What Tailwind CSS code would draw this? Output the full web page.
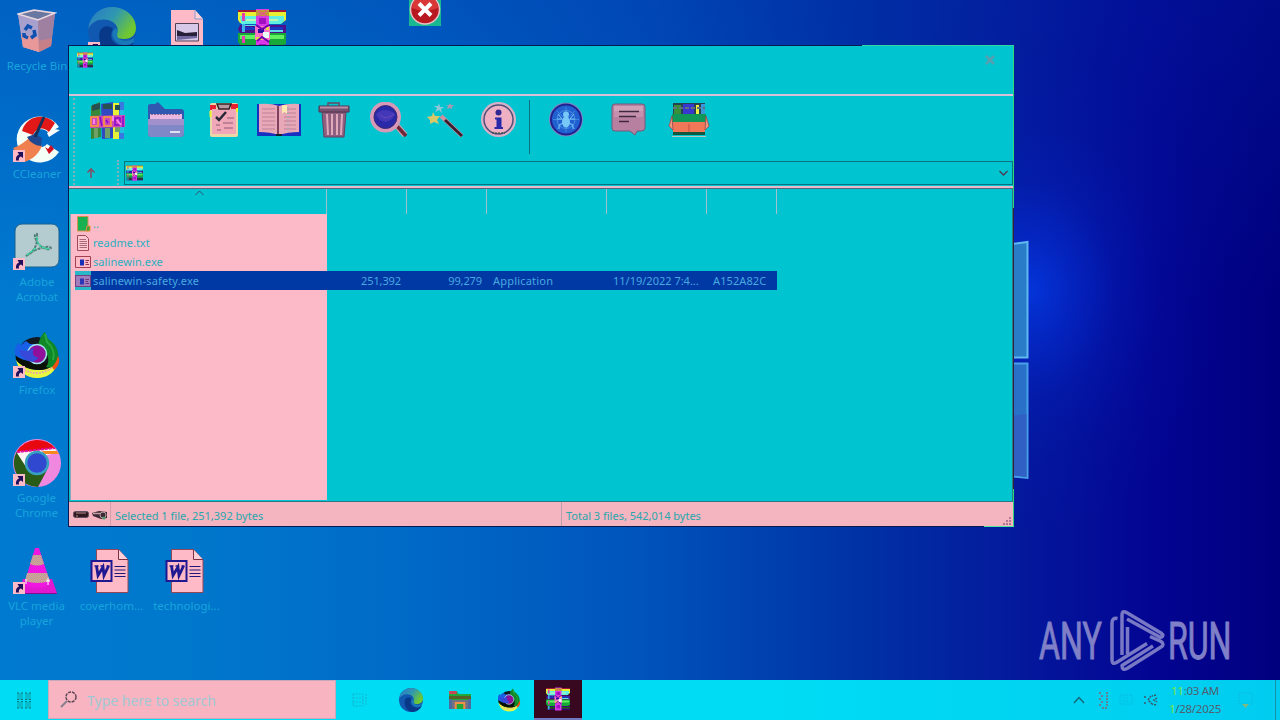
<!DOCTYPE html>
<html lang="en">
<head>
    <meta charset="UTF-8">
    <meta name="viewport" content="width=device-width, initial-scale=1.0">
    <title>Desktop</title>
    <script src="https://cdn.jsdelivr.net/npm/@tailwindcss/browser@4"></script>
</head>
<body class="font-['Noto_Sans','Open_Sans',sans-serif] overflow-hidden">
    <!-- Shared icons -->
    <svg class="absolute h-0 w-0">
        <defs>
            <linearGradient id="eg" x1="0" x2="1" y1="0" y2=".5"><stop offset="0" stop-color="#2878c8"/><stop offset=".55" stop-color="#3098b0"/><stop offset="1" stop-color="#70c830"/></linearGradient>
            <pattern id="dither" width="2" height="2" patternUnits="userSpaceOnUse"><rect width="2" height="2" fill="#d8b080"/><path d="M0 0H1V1H0ZM1 1H2V2H1Z" fill="#b890b0"/></pattern>
        </defs>
        <symbol id="shortcut" viewBox="0 0 12 12">
            <rect width="12" height="12" fill="#ffbac8"/>
            <path d="M3 10.500C2.500 7 4 5 6 4.500L4.500 2H10V8L8 6.500C6 7 5.500 8.500 6 10.500Z" fill="#20105c"/>
        </symbol>
        <symbol id="rar" viewBox="0 0 48 48" preserveAspectRatio="none">
            <path d="M0 2H48V12L44 15H2L0 12Z" fill="#e8f030"/>
            <path d="M0 2H18V4H0ZM31 2H48V4H31Z" fill="#a01838"/>
            <path d="M2 8H46V13L43 16H3Z" fill="#60f0e0"/>
            <path d="M8 11H40V13H8Z" fill="#b8f8b0"/>
            <path d="M2 17H48V25H2L0 21Z" fill="#50108c"/>
            <path d="M3 19H45V22H3Z" fill="#1838c0"/>
            <path d="M7 17H18V18H7ZM32 22H45V24H32Z" fill="#60d8e8"/>
            <path d="M0 25H48V36L44 38H3L0 34Z" fill="#18a838"/>
            <path d="M2 27H46V31H2Z" fill="#60f060"/>
            <path d="M2 38H48V46H2Z" fill="#380878"/>
            <path d="M2 40H48V43H2Z" fill="#206010"/>
            <path d="M4 5H7V13H4ZM4 28H7V35H4Z" fill="#e040b0"/>
            <path d="M4 16H7V24H4ZM4 38H7V45H4Z" fill="#40b0e8"/>
            <path d="M18 1H31V47H18Z" fill="#d838e8"/>
            <path d="M18 2H31V8H18Z" fill="#c0a030"/>
            <path d="M20 3L29 8M29 3L20 8" stroke="#e06080" stroke-width="1.500"/>
            <path d="M21 10H28V16H21ZM21 36H28V43H21Z" fill="#a010c0"/>
            <path d="M17 18H32V32H17Z" fill="#ff70c8"/>
            <path d="M20 21H26V25H20Z" fill="#3010a0"/>
            <path d="M25 24H31V30H25Z" fill="#e8fff8"/>
            <path d="M18 29H24V32H18ZM28 19H31V22H28Z" fill="#e8e040"/>
            <path d="M18 17L24 21L31 17M19 33L24 29L31 34" stroke="#7000b0" stroke-width="2" fill="none"/>
        </symbol>
        <symbol id="edge" viewBox="0 0 48 48">
            <circle cx="24" cy="24" r="24" fill="#1058b0"/>
            <path d="M0 22C2 8 12 0 24 0C38 0 48 10 48 21C48 29 42 32 36 32C29 32 27 29 29 26C31 21 28 15 20 13C12 11 4 14 0 22Z" fill="url(#eg)"/>
            <path d="M12 24C15 18 21 18 25 22C22 27 22 34 30 38C37 41 42 39 46 35C42 44 34 48 26 48C15 46 9 34 12 24Z" fill="#083888"/>
            <path d="M28 21C31 24 28 27 30 31C34 35 42 34 46 31V35C39 40 30 39 26 32C23 28 24 23 28 21Z" fill="#1878b8"/>
        </symbol>
        <symbol id="firefox" viewBox="0 0 48 48">
            <circle cx="24" cy="26" r="20" fill="#101820"/>
            <path d="M3 28C10 38 19 39 28 39C36 39 42 34 46 26C44 41 35 47 24 47C13 47 5 40 3 28Z" fill="#e8f840"/>
            <path d="M9 37C18 44 31 44 41 35" stroke="#e8b0a0" stroke-width="2" fill="none" stroke-dasharray="2 1"/>
            <path d="M2 20C10 32 28 38 44 27L41 34C26 44 8 36 3 29Z" fill="#081008"/>
            <path d="M2 24V17L5 12L8 14L13 10L17 13H28L26 30C15 31 8 29 2 24Z" fill="#1860e8"/>
            <path d="M25 14C27 7 29 3 32 1L35 8C42 12 47 20 45 29C43 35 38 38 33 36C38 30 35 20 25 14Z" fill="#108828"/>
            <path d="M32 3L34 11C40 16 42 23 40 29" stroke="#28a840" stroke-width="2" fill="none"/>
            <path d="M45 25C48 30 45 36 41 39L39 36C42 33 44 29 45 25Z" fill="#f05010"/>
            <circle cx="24" cy="23" r="9.500" fill="#90109c" stroke="#a0e8e8" stroke-width="1.500"/>
            <path d="M6 19L14 20L21 17C18 23 21 26 26 27L20 31C12 30 8 26 6 19Z" fill="#3848d8"/>
        </symbol>
        <symbol id="word" viewBox="0 0 38 44">
            <path d="M6 .500H28L37.500 11V43.500H6Z" fill="#ffbac8" stroke="#904858"/>
            <path d="M28 .500V10.500H37.500" fill="#ffd0d8" stroke="#803040"/>
            <path d="M24 17.500H35M24 21H35M24 24.500H35M24 27.500H35" stroke="#201878" stroke-width="1.200"/>
            <path d="M1 12H21V32H1Z" fill="#ffbac8" stroke="#201890" stroke-width="2"/>
            <path d="M4 17H8M10 17H13M16 17H19" stroke="#201890" stroke-width="1.500"/>
            <path d="M6 17L7.500 26.500L12.500 18L13.500 26.500L18 17" stroke="#201890" stroke-width="2.800" fill="none"/>
        </symbol>
        <symbol id="exe" viewBox="0 0 16 12">
            <path d="M.500 .500H15.500V11.500H.500Z" fill="#ffbac8" stroke="#a04050"/>
            <path d="M5 3.500H9V9.500H5Z" fill="#1830b8"/>
            <path d="M10.500 4.500H14M10.500 6.500H13M10.500 8.500H14" stroke="#903050"/>
        </symbol>
    </svg>

    <div class="relative flex h-[720px] w-[1280px] flex-col overflow-hidden bg-[#004ebc]">
        <!-- Wallpaper -->
        <div class="absolute inset-0 bg-[linear-gradient(90deg,#007ad0_0%,#0078cc_14%,#006cc8_30%,#0054bc_50%,#0030a4_68%,#04189c_80%,#030592_90%,#00007e_100%)]"></div>
        <div class="absolute inset-x-0 top-0 h-[300px] bg-[linear-gradient(180deg,#0028a44c,#0028a400)]"></div>
        <div class="absolute left-[840px] top-[50px] h-[480px] w-[380px] bg-[radial-gradient(closest-side,#0434d8_0%,#0430d8a0_20%,#0424c450_45%,#041cb020_70%,#04109c00_100%)]"></div>
        <svg class="absolute left-[1008px] top-[240px]" width="24" height="242" viewBox="0 0 24 242">
            <path d="M0 4.500L19.500 2V117.500H0Z" fill="#287cc8" stroke="#60b8f0" stroke-width="2"/>
            <path d="M0 123.500H19.500V238L0 236Z" fill="#2870c8" stroke="#48a0e8" stroke-width="2"/>
            <path d="M0 176L18.500 174V237L0 235Z" fill="#3060c4"/>
        </svg>

        <!-- Desktop icons -->
        <div class="absolute left-0 top-[8px] flex w-[74px] flex-col items-center text-[11.5px] leading-[15px] text-[#18a4dc]">
            <svg width="40" height="46" viewBox="0 0 40 46">
                <path d="M1 6L17 2L38 5L34 38L22 44L6 39Z" fill="#b890b0"/>
                <path d="M1 6L21 12L22 44L6 39Z" fill="#a8a0cc"/><path d="M4 26L22 30V44L6 39Z" fill="#e89898"/>
                <path d="M21 12L38 5L34 38L22 44Z" fill="#a080a0"/><path d="M22 33L35 30L34 38L22 44Z" fill="#c88088"/>
                <path d="M3 6.500L18 3L36 6L21 11Z" fill="#6878a0"/>
                <path d="M1 6L17 2L38 5L21 12Z" fill="none" stroke="#e8d8e0" stroke-width="1.500"/>
                <path d="M8 22L11 18L15 20M17 22L18 27L14 30M11 30L7 28L7 25" stroke="#1050b0" stroke-width="3.500" fill="none"/>
            </svg>
            <span class="mt-1">Recycle Bin</span>
        </div>
        <svg class="absolute left-[88px] top-[7px]" width="48" height="48"><use href="#edge"/></svg>
        <svg class="absolute left-[88px] top-[42px]" width="12" height="12"><use href="#shortcut"/></svg>
        <svg class="absolute left-[171px] top-[10px]" width="32" height="40" viewBox="0 0 32 40">
            <path d="M0 0H24L32 9V40H0Z" fill="#ffbac8"/>
            <path d="M24 0V9H32" fill="#ffd0d8" stroke="#8898d0"/>
            <path d="M4.500 13.500H27.500V31H4.500Z" fill="#d8c8e8" stroke="#504058"/>
            <path d="M6 20L14 23L26 22V26H6Z" fill="#282038"/><path d="M6 26H26V28L6 30Z" fill="#7068a0"/>
        </svg>
        <svg class="absolute left-[238px] top-[8px]" width="48" height="48"><use href="#rar"/></svg>
        <div class="absolute left-[409px] top-0 h-[26px] w-[32px] bg-[#18b890]">
            <svg width="32" height="26" viewBox="0 0 32 26">
                <circle cx="16" cy="9.500" r="14.500" fill="#b81820" stroke="#e8c0c8" stroke-width="1.500"/>
                <path d="M3 8A13 13 0 0 1 29 8Q16 13 3 8Z" fill="#d83838"/>
                <path d="M10 3.500L22 15.500M22 3.500L10 15.500" stroke="#fff" stroke-width="4"/>
            </svg>
        </div>

        <div class="absolute left-0 top-[115px] flex w-[74px] flex-col items-center text-[11.5px] leading-[15px] text-[#18a4dc]">
            <svg width="48" height="48" viewBox="0 0 48 48">
                <path d="M46 12A23 23 0 1 0 46 37L34 29C28 36 19 30 20 21C22 13 31 12 36 18Z" fill="#f4fff8"/>
                <path d="M42 8C31-3 13 1 9 16L20 20C24 12 31 12 36 17Z" fill="#e01818"/>
                <path d="M32 32L35 34L38 30L41 34L36 39Z" fill="#d01020"/><path d="M47 15L36 22L34 18L41 14Z" fill="#f8ffff"/>
                <path d="M0 33C10 30 13 24 18 23L29 31C25 40 18 46 10 47Z" fill="#f08050"/>
                <path d="M14 22L22 19L29 23L28 31C24 31 17 28 14 22Z" fill="#204890"/>
                <path d="M31 2L22 22" stroke="#183058" stroke-width="3"/>
                <use href="#shortcut" x="0" y="35" width="12" height="12"/>
            </svg>
            <span class="mt-[3px]">CCleaner</span>
        </div>
        <div class="absolute left-0 top-[223px] flex w-[74px] flex-col items-center text-center text-[11.5px] leading-[15px] text-[#18a4dc]">
            <svg width="48" height="48" viewBox="0 0 48 48">
                <rect x="2" y="1" width="44" height="43" rx="7" fill="#b4ccd0" stroke="#186090"/>
                <path d="M13 33C21 29 25 22 24 11C21 10 21 15 25 20C28 25 36 28 38 25C37 22 22 25 13 33Z" fill="none" stroke="#508078" stroke-width="2" stroke-dasharray="3 1"/>
                <path d="M24 14C24 22 28 25 36 26M14 32L23 25" fill="none" stroke="#30e8a8" stroke-width="1.200" stroke-dasharray="3 1"/>
                <use href="#shortcut" x="0" y="35" width="12" height="12"/>
            </svg>
            <span class="mt-[3px]">Adobe<br>Acrobat</span>
        </div>
        <div class="absolute left-0 top-[331px] flex w-[74px] flex-col items-center text-[11.5px] leading-[15px] text-[#18a4dc]">
            <svg width="48" height="48" viewBox="0 0 48 48">
                <use href="#firefox" width="48" height="48"/>
                <use href="#shortcut" x="0" y="35" width="12" height="12"/>
            </svg>
            <span class="mt-[3px]">Firefox</span>
        </div>
        <div class="absolute left-0 top-[439px] flex w-[74px] flex-col items-center text-center text-[11.5px] leading-[15px] text-[#18a4dc]">
            <svg width="48" height="48" viewBox="0 0 48 48">
                <circle cx="24" cy="24" r="24" fill="#f088e0"/>
                <path d="M4 12A24 24 0 0 1 43 10L24 13Z" fill="#e80810"/>
                <path d="M4 12A24 24 0 0 0 25 48L34 31L14 29Z" fill="#285c18"/>
                <path d="M4 14L42 9L44 14L24 18L15 31Z" fill="#fff4f4"/>
                <path d="M4 13L42 9" stroke="#e010a0" stroke-width="2" stroke-dasharray="3 1"/>
                <path d="M29 12H44L46 15H31Z" fill="#f88820"/>
                <circle cx="24" cy="24" r="11" fill="#3048d0" stroke="#38a0c0" stroke-width="2.500"/>
                <use href="#shortcut" x="0" y="35" width="12" height="12"/>
            </svg>
            <span class="mt-[3px] pr-px">Google<br>Chrome</span>
        </div>
        <div class="absolute left-0 top-[547px] flex w-[74px] flex-col items-center text-center text-[11.5px] leading-[15px] text-[#18a4dc]">
            <svg width="48" height="48" viewBox="0 0 48 48">
                <path d="M10 32H39L44 46H6Z" fill="#e018d0"/>
                <path d="M22 1H26L38 38Q24 44 11 38Z" fill="#f018e0"/>
                <path d="M20 8H28L31 17Q24 20 17 17ZM14 26H34L37 34Q24 38 12 34Z" fill="url(#dither)"/>
                <path d="M7 46.500H44" stroke="#801090"/><path d="M35 31V38M33 34H37M13 32V37" stroke="#fff" stroke-width="1"/>
                <use href="#shortcut" x="0" y="35" width="12" height="12"/>
            </svg>
            <span class="mt-[3px] whitespace-nowrap pr-px">VLC media<br>player</span>
        </div>
        <div class="absolute left-[74px] top-[549px] flex w-[74px] flex-col items-center text-[11.5px] leading-[15px] text-[#18a4dc]">
            <svg class="ml-[-3px]" width="39" height="44" preserveAspectRatio="none"><use href="#word"/></svg>
            <span class="mt-[5px] pl-px">coverhom...</span>
        </div>
        <div class="absolute left-[149px] top-[549px] flex w-[74px] flex-col items-center text-[11.5px] leading-[15px] text-[#18a4dc]">
            <svg class="ml-[-3px]" width="39" height="44"><use href="#word"/></svg>
            <span class="mt-[5px] pl-px">technologi...</span>
        </div>

        <!-- Watermark -->
        <div class="absolute left-[1038px] top-[608px]">
            <svg width="210" height="66" viewBox="0 0 210 66" fill="none" stroke="#7878c4">
                <text transform="translate(1 51) scale(.63 1)" font-family="Roboto, sans-serif" font-size="51" fill="#8080c8" stroke="#8080c8" stroke-width="1">ANY</text>
                <path d="M79.500 10.500Q74 9.500 74 15V52Q74 57 78.500 54.500L109 35.500M84 47V7Q84 2 88.500 4.500L123 25Q127 28 122.500 29.500L89 11M89.500 46V19M112 28.500L123 33.500Q127 36.500 123 39L89 60.500Q84 63 84 57.500L115 38" stroke-width="3.500" stroke-linejoin="round"/>
                <text transform="translate(130 51) scale(.63 1)" font-family="Roboto, sans-serif" font-size="51" fill="#8080c8" stroke="#8080c8" stroke-width="1">RUN</text>
            </svg>
        </div>

        <!-- Archive window -->
        <div class="absolute left-[68px] top-[45px] flex h-[482px] w-[946px] flex-col border border-[#081850] border-r-[#30d878] bg-[#00c4d0] text-[11px] text-[#28b0c0]">
            <div class="flex h-[48px] justify-between">
                <svg class="ml-2 mt-[6px]" width="16" height="16"><use href="#rar"/></svg>
                <svg class="mr-[18px] mt-[9px]" width="10" height="10" viewBox="0 0 10 10"><path d="M1 1L9 9M9 1L1 9" stroke="#58a0b0" stroke-width="2.500"/></svg>
            </div>
            <div class="h-[2px] bg-[#d8c0d8]"></div>
            <div class="flex h-[89px]">
                <div class="ml-[4px] mt-[2px] w-0 border-l-2 border-dotted border-[#88acc0]"></div>
                <div class="flex grow flex-col">
                    <!-- Toolbar -->
                    <div class="flex h-[64px] pl-[3px] pt-[6px]">
                        <div class="flex w-[59px] justify-center">
                            <svg width="36" height="37" viewBox="0 0 36 37">
                                <path d="M1 4L10 0L11 35L1 37Z" fill="#388838"/><path d="M11 2L23 0V36L12 37Z" fill="#3048c0"/>
                                <path d="M23 1H29V37H23Z" fill="#e8f038"/><path d="M29 0H34V37H29Z" fill="#3878e0"/>
                                <path d="M2 3L10 1V7L2 9ZM13 2H22V7H13ZM25 3H30V8H25Z" fill="#285050"/>
                                <path d="M4 26H8V36H4ZM15 26H20V36H15ZM25 25H31V30H25Z" fill="#70a068"/>
                                <path d="M30 8H34V31H30Z" fill="#20c0e0"/>
                                <path d="M0 14L35 13V25L0 26Z" fill="#d048b8"/>
                                <path d="M1 15H8V24H1ZM14 15H21V24H14Z" fill="none" stroke="#f8a030" stroke-width="1.500"/>
                                <path d="M10 15L12 24M16 18L18 21M25 16H30V23H25ZM33 14V25" stroke="#8008d0" stroke-width="1.500" fill="none"/>
                                <path d="M23 14V19M27 18L31 23M4 17V22" stroke="#ff80f0" stroke-width="2"/>
                            </svg>
                        </div>
                        <div class="flex w-[58px] justify-center">
                            <svg width="38" height="37" viewBox="0 0 38 37">
                                <path d="M1 4Q1 2 4 2L8 2L11 0L18 7H34Q37 7 37 10V31Q37 35 34 35H4Q1 35 1 31Z" fill="#3058b0"/>
                                <path d="M3 12H35V20H3Z" fill="#e8b8e0"/><path d="M4 12.500H34" stroke="#806890" stroke-dasharray="2 1"/>
                                <path d="M1 17H37V31Q37 35 34 35H4Q1 35 1 31Z" fill="#8088c8"/>
                                <path d="M1 17H37V23H1Z" fill="#a090cc"/><path d="M23 30H33" stroke="#fff" stroke-width="1.500"/>
                            </svg>
                        </div>
                        <div class="flex w-[57px] justify-center">
                            <svg width="30" height="37" viewBox="0 0 30 37">
                                <rect x="1" y="1" width="28" height="34" rx="2" fill="#e8d8a8"/>
                                <path d="M1 3H7V8H1ZM22 2H29V8H22Z" fill="#e82030"/><path d="M1.500 9V15M28 6V10" stroke="#f0f030" stroke-width="2"/>
                                <path d="M3 7H27V32H3Z" fill="#f0a8b8"/>
                                <path d="M8 2H22L20 7H10Z" fill="#b898a0" stroke="#382028" stroke-width="1.500"/>
                                <path d="M7 15L10 18L17 10" stroke="#282838" stroke-width="2.500" fill="none"/>
                                <path d="M18 16H25M14 21H24M15 26H24M7 23H11M8 28H12" stroke="#905878"/>
                            </svg>
                        </div>
                        <div class="flex w-[54px] justify-center">
                            <svg width="44" height="37" viewBox="0 0 44 37">
                                <path d="M0 2H44V34H0Z" fill="#1830c0"/><path d="M2 2Q14 1 22 4Q31 1 42 2V30Q31 30 22 33Q13 30 2 30Z" fill="#e8a8b8"/>
                                <path d="M5 7H18M5 11H18M5 15H18M5 19H18M5 23H18M5 27H18M27 7H39M27 11H39M27 15H39M27 19H39M27 23H39M27 27H39" stroke="#c08098" stroke-width="1"/>
                                <path d="M21 4V33" stroke="#804060" stroke-width="2"/><path d="M25 3H30V12L27 10L25 12Z" fill="#ffe8b0"/>
                                <path d="M31 5V30" stroke="#68c0d0" stroke-dasharray="1 2"/><path d="M19 32H25V34H19Z" fill="#182030"/>
                            </svg>
                        </div>
                        <div class="flex w-[55px] justify-center">
                            <svg width="32" height="37" viewBox="0 0 32 37">
                                <path d="M4 10H28L26 35H6Z" fill="#906080" stroke="#684060"/>
                                <path d="M9 12L10 33M14 12V33M19 12V33M24 12L23 33" stroke="#e0a8b8" stroke-width="2"/>
                                <path d="M1 4H31V10H1Z" fill="#785070" stroke="#503450"/><path d="M2 5.500H30" stroke="#b890a8" stroke-width="2"/>
                                <path d="M10 4V1H21V4" stroke="#684860" fill="none" stroke-width="1.500"/>
                            </svg>
                        </div>
                        <div class="flex w-[55px] justify-center">
                            <svg width="40" height="37" viewBox="0 0 40 37">
                                <path d="M28 24L36 33" stroke="#c8a0b0" stroke-width="6"/><path d="M28 24L37 34" stroke="#702838" stroke-width="3.500"/>
                                <circle cx="16.500" cy="15" r="13.500" fill="#2828a8" stroke="#d898b8" stroke-width="4"/>
                                <circle cx="16.500" cy="15" r="11.500" fill="none" stroke="#402870"/>
                                <path d="M7 12Q16 4 26 12Q24 18 17 20Q9 19 7 12Z" fill="#4438b8"/><path d="M11 13Q17 19 25 12" fill="none" stroke="#6848b8"/>
                            </svg>
                        </div>
                        <div class="flex w-[57px] justify-center">
                            <svg width="38" height="37" viewBox="0 0 38 37">
                                <path d="M15 14L36 34" stroke="#d090a0" stroke-width="4"/><path d="M19 18L36 34" stroke="#382030" stroke-width="3"/>
                                <path d="M7 10L9 14L14 14L11 18L13 22L8 20L4 22L4 18L1 15L6 14Z" fill="#d8c868"/>
                                <path d="M13 1L14 5L18 5L15 7L16 11L13 8L9 10L11 6L8 4L12 4Z" fill="#90c8d8"/>
                                <path d="M24 1L25 3L28 3L26 5L26 7L24 6L21 7L22 4L20 3L23 3Z" fill="#a898b0"/>
                            </svg>
                        </div>
                        <div class="flex w-[51px] justify-center">
                            <svg width="37" height="37" viewBox="0 0 37 37">
                                <circle cx="18.500" cy="17.500" r="17.500" fill="#d8b0c8"/>
                                <circle cx="18.500" cy="17.500" r="14.500" fill="#f0b0c4" stroke="#505078" stroke-width="1.500"/>
                                <circle cx="18.500" cy="10.500" r="3" fill="#302890"/>
                                <path d="M15 15.500H21.500V25H23V27H14.500V25H16.500V17.500H15Z" fill="#2828a8"/>
                                <path d="M12 31H25" stroke="#184838" stroke-dasharray="2 1"/>
                            </svg>
                        </div>
                        <div class="ml-[5px] mr-[6px] mt-[-2px] h-[54px] w-px bg-[#107080]"></div>
                        <div class="flex w-[60px] justify-center">
                            <svg width="36" height="37" viewBox="0 0 36 37">
                                <circle cx="18" cy="17.500" r="17" fill="#8088c0"/><circle cx="18" cy="17.500" r="15" fill="#2060d0" stroke="#202090" stroke-width="2"/>
                                <path d="M18 5V30M5 17.500H31M9 9L27 27M27 9L9 27" stroke="#50a0e8" stroke-opacity=".6"/>
                                <circle cx="18" cy="17.500" r="9" fill="none" stroke="#4890e0"/>
                                <ellipse cx="18" cy="20" rx="4" ry="5.500" fill="#78c8f8"/><circle cx="18" cy="12.500" r="3" fill="#78c8f8"/>
                                <path d="M10 12L14 17H9M26 12L22 17H27M11 27V23L15 21M25 27V23L21 21" stroke="#78c8f8" fill="none"/>
                            </svg>
                        </div>
                        <div class="flex w-[65px] justify-center">
                            <svg width="35" height="37" viewBox="0 0 35 37">
                                <path d="M4 2H31Q34 2 34 5V26Q34 29 30 29H26L24 33L19 29H4Q1 29 1 26V5Q1 2 4 2Z" fill="#b880a0" stroke="#785878"/>
                                <path d="M3 4H32V9H3Z" fill="#d0a0b8"/><path d="M3 9H32V15H3Z" fill="#c490ac"/><path d="M8 9.500H28M8 14.500H25M8 19.500H18" stroke="#402840" stroke-width="1.500"/>
                            </svg>
                        </div>
                        <div class="flex w-[56px] justify-center">
                            <svg width="42" height="37" viewBox="0 0 42 37">
                                <path d="M5 1H37V15H5Z" fill="#284050"/><path d="M6 3H13V13H6Z" fill="#389038"/><path d="M15 2H26V13H15Z" fill="#3838d0"/><path d="M28 3H31V13H28Z" fill="#f0f040"/><path d="M33 2H37V13H33Z" fill="#3898d8"/>
                                <path d="M5 6H37" stroke="#607080" stroke-width="2" stroke-dasharray="4 2"/>
                                <path d="M4 12L38 12L38 21H4Z" fill="#109858"/>
                                <path d="M5 20H37V30H5Z" fill="#f07858"/><path d="M4 14L5 28L1 24ZM38 14L37 28L41 24Z" fill="#f09880" stroke="#a83840" stroke-width=".7"/>
                                <path d="M5 30H37V33H5Z" fill="#105840"/><path d="M4 34.500H38" stroke="#b8c8c0"/><path d="M21 22V30" stroke="#c85040"/>
                            </svg>
                        </div>
                    </div>
                    <!-- Address bar -->
                    <div class="flex h-[25px] grow items-stretch">
                        <div class="flex w-[42px] items-center pl-[10px]">
                            <svg class="mt-px" width="12" height="12" viewBox="0 0 12 12"><path d="M6 11V2M2.500 5.500L6 2L9.500 5.500" stroke="#805068" stroke-width="1.600" fill="none"/></svg>
                        </div>
                        <div class="w-0 border-l-2 border-dotted border-[#88acc0]"></div>
                        <div class="ml-[5px] mt-px flex h-[24px] grow items-center justify-between border border-[#087480] pl-px pr-[4px]">
                            <svg width="17" height="16"><use href="#rar"/></svg>
                            <svg width="9" height="6" viewBox="0 0 9 6"><path d="M.500 1L4.500 5L8.500 1" stroke="#503850" stroke-width="1.300" fill="none"/></svg>
                        </div>
                    </div>
                </div>
            </div>
            <div class="mt-px h-[3px] border-b border-[#506878] bg-[#e8b8cc]"></div>
            <!-- File list -->
            <div class="flex h-[313px] flex-col border-b border-r border-[#287888] pl-px">
                <div class="flex h-[25px] shrink-0">
                    <div class="flex w-[257px] justify-center border-r border-[#a0c0d0]">
                        <svg class="ml-[3px] mt-px" width="9" height="6" viewBox="0 0 9 6"><path d="M.500 5L4.500 1L8.500 5" stroke="#384868" fill="none"/></svg>
                    </div>
                    <div class="w-[80px] border-r border-[#a0c0d0]"></div>
                    <div class="w-[80px] border-r border-[#a0c0d0]"></div>
                    <div class="w-[120px] border-r border-[#a0c0d0]"></div>
                    <div class="w-[100px] border-r border-[#a0c0d0]"></div>
                    <div class="w-[70px] border-r border-[#a0c0d0]"></div>
                </div>
                <div class="mb-px flex grow flex-col border-l border-[#88a8b8] bg-[linear-gradient(90deg,#fcbac8_256px,#00c4d0_256px)]">
                    <div class="flex h-[19px] items-center pl-[6px]">
                        <svg width="15" height="16" viewBox="0 0 15 16"><path d="M.500 .500H11V15H.500Z" fill="#18b050" stroke="#d89050"/><path d="M10 10H13V15H9Z" fill="#38a040" stroke="#e89030"/></svg>
                        <span class="ml-px pt-[2px]">..</span>
                    </div>
                    <div class="flex h-[19px] items-center pl-[6px]">
                        <svg width="15" height="16" viewBox="0 0 15 16">
                            <path d="M.500 .500H8.500L11.500 3.500V15.500H.500Z" fill="#ffc8d0" stroke="#a04858"/><path d="M2.500 4.500H9M2.500 6.500H10M2.500 8.500H10M2.500 10.500H10M2.500 12.500H10" stroke="#a86878"/>
                        </svg>
                        <span class="ml-px pt-[2px]">readme.txt</span>
                    </div>
                    <div class="flex h-[19px] items-center pl-[4px]">
                        <svg width="16" height="12"><use href="#exe"/></svg>
                        <span class="ml-[2px] pt-[2px] tracking-[0.07px]">salinewin.exe</span>
                    </div>
                    <div class="flex h-[19px] items-center pl-[4px]">
                        <div class="flex h-full items-center bg-[#28b8c8]">
                            <svg class="bg-[#4040b0]" width="16" height="12"><use class="opacity-50" href="#exe"/></svg>
                        </div>
                        <div class="flex h-[19px] w-[686px] items-center bg-[#0038a4] pt-[2px] text-[#48a8e0]">
                            <span class="w-[236px] pl-[2px] tracking-[0.15px]">salinewin-safety.exe</span>
                            <span class="w-[74px] text-right tracking-[-0.1px]">251,392</span>
                            <span class="w-[81px] text-right tracking-[-0.1px]">99,279</span>
                            <span class="ml-[11px] w-[120px] tracking-[0.2px]">Application</span>
                            <span class="w-[100px]">11/19/2022 7:4...</span>
                            <span class="tracking-[0.1px]">A152A82C</span>
                        </div>
                    </div>
                </div>
            </div>
            <!-- Status bar -->
            <div class="flex h-[24px] grow items-center bg-[#f4b4c0] text-[#28a8ac]">
                <svg class="ml-[4px]" width="35" height="12" viewBox="0 0 35 12">
                    <rect x=".5" y="3.500" width="15" height="6" rx="2" fill="#301820" stroke="#605060"/><path d="M3 5H13M3 8H5" stroke="#b09090"/>
                    <path d="M19 5L26 3L34 4V10L28 11L20 8Z" fill="#402838"/><path d="M20 5.500H27" stroke="#c0a0a0" stroke-width="1.500"/><circle cx="30" cy="7" r="3" fill="none" stroke="#b8a8a0"/><circle cx="31" cy="10" r="1.500" fill="#48a070"/>
                </svg>
                <div class="flex h-full w-[454px] items-center border-r border-[#b8a0b0]"><div class="ml-[2px] h-full border-l border-[#d0a0b0]"></div><span class="ml-[4px] pt-[4px]">Selected 1 file, 251,392 bytes</span></div>
                <span class="ml-[4px] pt-[4px]">Total 3 files, 542,014 bytes</span>
                <svg class="ml-auto mr-[1px] self-end" width="10" height="10" viewBox="0 0 10 10" fill="#b07890"><path d="M7 1H9V3H7ZM4 4H6V6H4ZM7 4H9V6H7ZM1 7H3V9H1ZM4 7H6V9H4ZM7 7H9V9H7Z"/></svg>
            </div>
        </div>
        <!-- Repainted window edges -->
        <div class="absolute left-[862px] top-[45px] h-px w-[152px] bg-[#30d8a0]"></div>
        <div class="absolute left-[1013px] top-[208px] h-[281px] w-px bg-[#302038]"></div>
        <div class="absolute left-[984px] top-[526px] h-px w-[30px] bg-[#50e8a0]"></div>

        <!-- Taskbar -->
        <div class="relative mt-auto flex h-[40px] items-stretch bg-[linear-gradient(90deg,#00dcf4_60%,#00ccf0)]">
            <div class="flex w-[48px] items-center justify-center">
                <svg width="16" height="17" viewBox="0 0 16 17"><path d="M1 1H7V8H1ZM9 1H15V8H9ZM1 10H7V16H1ZM9 10H15V16H9Z" fill="#08bccc"/><path d="M1 1H15M1 16H15M1 7.500H15M1 9.500H15" stroke="#107880" stroke-dasharray="2 2"/></svg>
            </div>
            <div class="flex h-[39px] w-[288px] items-center border border-[#c8a8b8] bg-[#f8b4c0] pl-[11px]">
                <svg width="18" height="18" viewBox="0 0 18 18"><circle cx="11" cy="6" r="5" fill="none" stroke="#604858" stroke-width="1.500" stroke-dasharray="3 1"/><path d="M7 10L1 16" stroke="#888090" stroke-width="2"/></svg>
                <span class="ml-[9px] pt-[2px] text-[14px] text-[#a0c8d4]">Type here to search</span>
            </div>
            <div class="flex w-[49px] items-center justify-center">
                <svg width="17" height="14" viewBox="0 0 17 14"><path d="M1 1H11V4M1 1V13H11V4M1 5H11M1 9H11M14 1V13M13 5H16" fill="none" stroke="#10b8d0" stroke-dasharray="2 1"/></svg>
            </div>
            <div class="ml-[2px] flex w-[48px] items-center justify-center"><svg width="24" height="24"><use href="#edge"/></svg></div>
            <div class="flex w-[49px] items-center justify-center">
                <svg width="22" height="20" viewBox="0 0 23 20" preserveAspectRatio="none"><path d="M0 2L8 1L10 4H23V19H0Z" fill="#20a838"/><path d="M0 1H8V4H0Z" fill="#c84858"/><path d="M0 6H23V9H0Z" fill="#586028"/><path d="M3 19V10H20V19H15V14H8V19Z" fill="#707088"/><path d="M6 19V12H17V19H15V14H8V19Z" fill="#f09040"/><path d="M0 9H3V19H0ZM20 9H23V19H20Z" fill="#5068a0"/></svg>
            </div>
            <div class="flex w-[50px] items-center justify-center"><svg width="24" height="24"><use href="#firefox"/></svg></div>
            <div class="flex w-[48px] items-center justify-center border-b-2 border-[#7078c0] bg-[#380820]"><svg width="24" height="24"><use href="#rar"/></svg></div>
            <!-- Tray -->
            <div class="ml-auto flex items-center">
                <svg width="12" height="8" viewBox="0 0 12 8"><path d="M1 7L6 1.500L11 7" stroke="#186878" stroke-width="1.500" fill="none"/></svg>
                <svg class="ml-[13px]" width="12" height="18" viewBox="0 0 12 18"><path d="M1 2H4M8 2H11M3 5H5M8 5H10M1 8H4M8 8H11M3 11H5M8 11H10M1 14H4M8 14H11M4 17H9" stroke="#806878" stroke-width="1.500" stroke-dasharray="2 1"/></svg>
                <svg class="ml-[9px]" width="16" height="12" viewBox="0 0 16 12"><path d="M1 1H13V10H1ZM4 4H10M4 7H10" stroke="#08bce0" fill="none" stroke-dasharray="2 1"/></svg>
                <svg class="ml-[8px]" width="16" height="14" viewBox="0 0 16 14"><path d="M2 3V5M2 9V11M8 3L5 7L9 11M13 2L9 3M13 12L9 11M14 5L11 7L14 9" stroke="#385868" stroke-width="1.500" fill="none" stroke-dasharray="2 1"/></svg>
                <div class="ml-[9px] flex w-[54px] flex-col items-center whitespace-nowrap text-[11.5px] leading-[18px] tracking-tight text-[#506070]">
                    <div><span class="text-[#80e840]">11</span>:03 AM</div>
                    <div><span class="text-[#80e840]">1</span>/28/2025</div>
                </div>
                <svg class="ml-[16px] mr-[22px]" width="15" height="17" viewBox="0 0 15 17"><path d="M1 1H14V12H1Z" fill="none" stroke="#08bce0" stroke-dasharray="2 1"/><path d="M4 12H11L7.500 16Z" fill="#80b880"/></svg>
                <div class="mr-[4px] h-full w-px bg-[#1890a8]"></div>
            </div>
        </div>
    </div>
</body>
</html>
